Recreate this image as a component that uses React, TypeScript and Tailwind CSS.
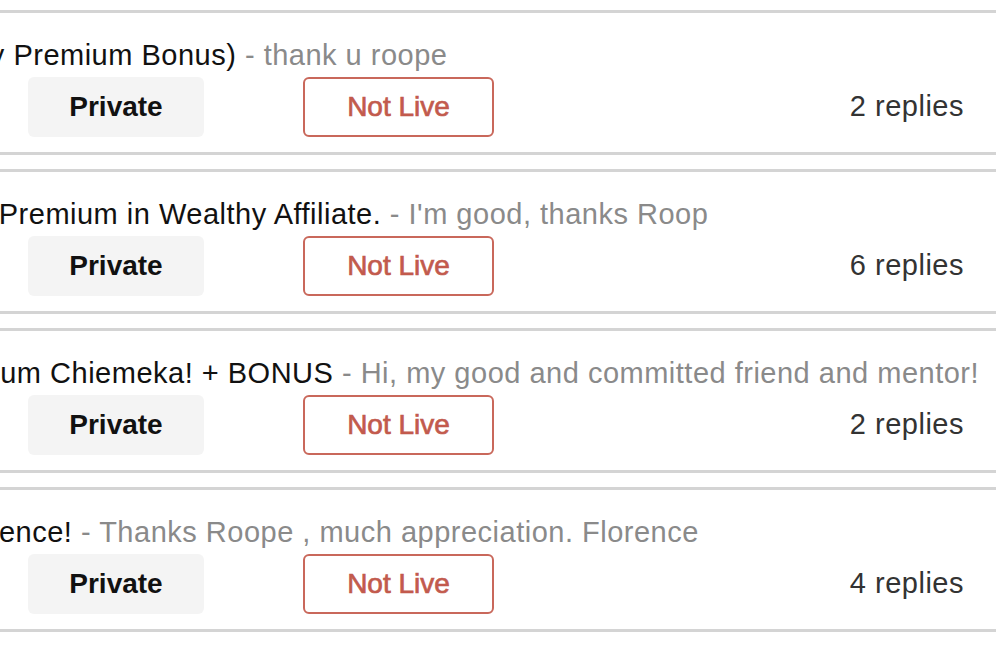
import React from 'react';

interface Topic {
  title: string;
  prefix: string;
  shift: string;
  excerpt: string;
  replies: number;
}

// titles are cut off at the left edge in the screenshot
const topics: Topic[] = [
  { prefix: '(My', title: ' Premium Bonus)', shift: '-ml-[45px]', excerpt: 'thank u roope', replies: 2 },
  { prefix: 'to ', title: 'Premium in Wealthy Affiliate.', shift: '-ml-[35px]', excerpt: "I'm good, thanks Roop", replies: 6 },
  { prefix: 'Premi', title: 'um Chiemeka! + BONUS', shift: '-ml-[78px]', excerpt: 'Hi, my good and committed friend and mentor!', replies: 2 },
  { prefix: 'Flor', title: 'ence!', shift: '-ml-[53px]', excerpt: 'Thanks Roope , much appreciation. Florence', replies: 4 },
];

function TopicRow({ topic }: { topic: Topic }) {
  return (
    <div className="border-y-[3px] border-[#d4d4d4] bg-white pt-[25px] pb-[15px]">
      <div className="overflow-hidden whitespace-nowrap text-[29px] leading-[34px] tracking-[0.5px]">
        <span className={`${topic.shift} inline-block text-[#111]`}>
          {topic.prefix}
          {topic.title}
        </span>
        <span className="text-[#8a8a8a]"> - {topic.excerpt}</span>
      </div>
      <div className="mt-[5px] flex items-center pl-[28px] pr-[32px]">
        <div className="flex h-[60px] w-[176px] items-center justify-center rounded-md bg-[#f4f4f4] text-[28px] font-bold text-[#111]">
          Private
        </div>
        <div className="ml-[99px] flex h-[60px] w-[191px] items-center justify-center rounded-md border-2 border-[#c9685b] text-[28px] text-[#c25a4d] [-webkit-text-stroke:0.7px_#c25a4d]">
          Not Live
        </div>
        <div className="ml-auto text-[29px] tracking-[0.5px] text-[#333]">{topic.replies} replies</div>
      </div>
    </div>
  );
}

export default function App() {
  return (
    <div className="min-h-screen bg-white pt-[10px] font-['Liberation_Sans',Arial,sans-serif]">
      <div className="flex flex-col gap-[14px]">
        {topics.map((t, i) => (
          <TopicRow key={i} topic={t} />
        ))}
      </div>
    </div>
  );
}
